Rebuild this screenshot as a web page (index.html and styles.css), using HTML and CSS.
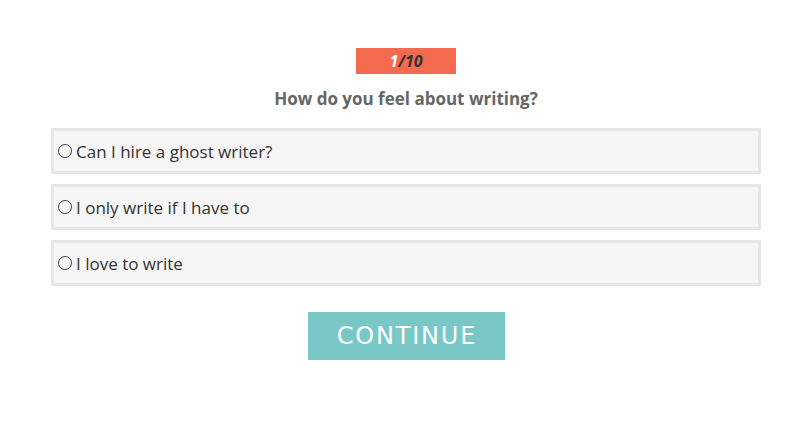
FILE: index.html
```html
<!DOCTYPE html>
<html>
<head>
<meta charset="utf-8">
<link rel="stylesheet" href="styles.css">
</head>
<body>
<div class="quiz">
  <div class="badge"><span class="cur">1</span>/10</div>
  <h1 class="question">How do you feel about writing?</h1>
  <div class="options">
    <label class="option"><span class="radio"></span>Can I hire a ghost writer?</label>
    <label class="option"><span class="radio"></span>I only write if I have to</label>
    <label class="option"><span class="radio"></span>I love to write</label>
  </div>
  <button class="continue">CONTINUE</button>
</div>
</body>
</html>
```
FILE: styles.css
```css
html, body { margin: 0; padding: 0; background: #fff; }
body { width: 810px; height: 425px; font-family: "Open Sans", "Liberation Sans", sans-serif; }
.quiz { display: flex; flex-direction: column; align-items: center; padding-top: 48px; }
.badge {
  width: 100px; height: 26px; background: #f36a4f; color: #333; margin-left: 2px;
  font-weight: 700; font-style: italic; font-size: 16px; line-height: 26px; text-align: center;
}
.badge .cur { color: #fff; }
.question { margin: 13px 0 0; font-size: 17px; font-weight: 700; color: #666; line-height: 24px; margin-left: 2px; }
.options { display: flex; flex-direction: column; gap: 10px; margin-top: 17px; margin-left: 2px; }
.option {
  box-sizing: border-box; width: 710px; height: 46px; background: #f5f5f5;
  border: 3px solid #e6e6e6; display: flex; align-items: center; padding-left: 4px;
  font-size: 17px; color: #333;
}
.radio {
  box-sizing: border-box; width: 14px; height: 14px; border: 1.6px solid #444; border-radius: 50%; margin-right: 4px; flex: none;
}
.continue {
  margin-top: 26px; width: 197px; height: 48px; border: 0; background: #79c7c7; color: #fff;
  font-family: "DejaVu Sans", "Liberation Sans", sans-serif; font-size: 24px; letter-spacing: 1.8px; text-indent: 1.8px; padding: 0; margin-left: 2px;
}
```
